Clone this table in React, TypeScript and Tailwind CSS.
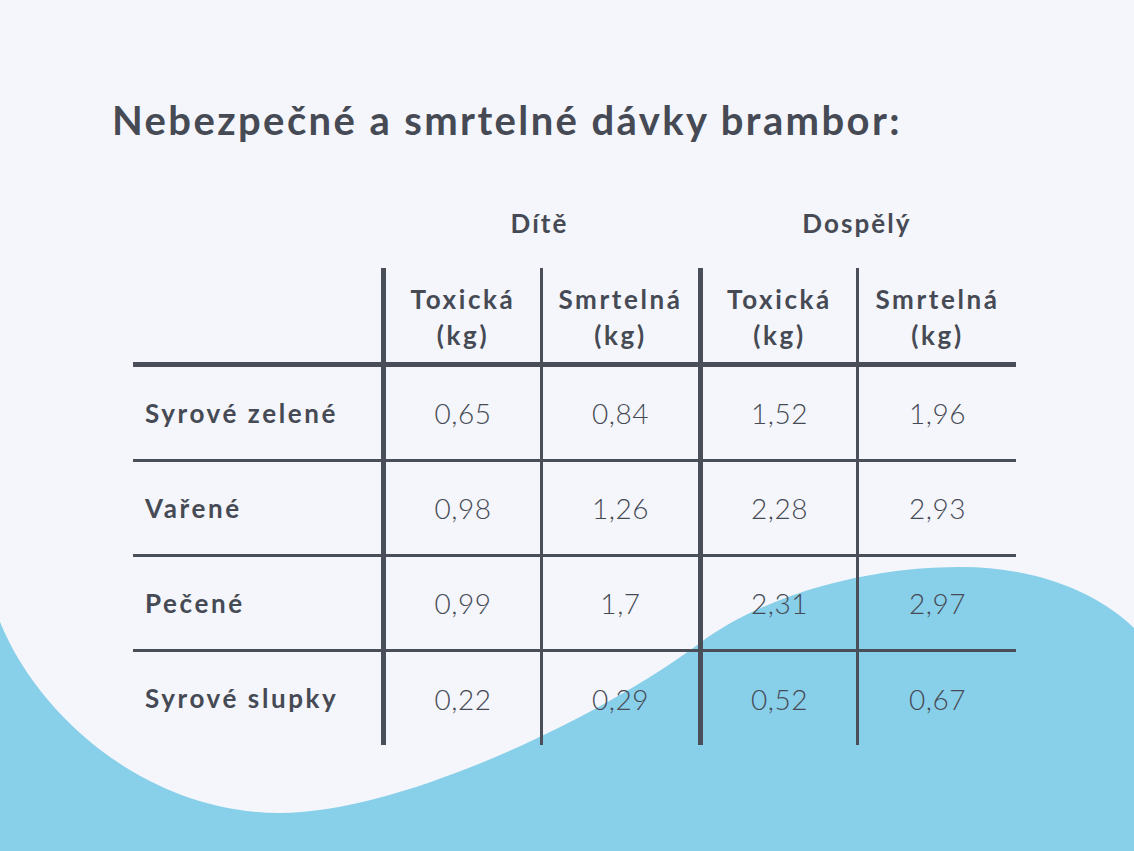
const rows = [
  { label: "Syrové zelené", values: ["0,65", "0,84", "1,52", "1,96"] },
  { label: "Vařené", values: ["0,98", "1,26", "2,28", "2,93"] },
  { label: "Pečené", values: ["0,99", "1,7", "2,31", "2,97"] },
  { label: "Syrové slupky", values: ["0,22", "0,29", "0,52", "0,67"] },
];

const cols = "grid grid-cols-[248px_159px_158px_158px_160px]";
const lines = ["", "border-l-[5px]", "border-l-[3px]", "border-l-[5px]", "border-l-[3px]"];

function Wave() {
  return (
    <svg
      className="absolute inset-0 h-full w-full"
      viewBox="0 0 1134 851"
      preserveAspectRatio="none"
    >
      <path
        d="M0,622 C40,720 150,813 280,813 C400,813 600,718 700,643 C760,598 860,567 960,567 C1040,567 1100,595 1134,628 L1134,851 L0,851 Z"
        fill="#88cfea"
      />
    </svg>
  );
}

export default function App() {
  return (
    <div
      className="relative h-[851px] w-full overflow-hidden bg-[#f4f6fb] text-[#464a54]"
      style={{ fontFamily: "Lato, 'Open Sans', sans-serif" }}
    >
      <Wave />
      <div className="relative flex flex-col pl-[133px] pt-[90px]">
        <h1 className="-ml-[21px] text-[40px] font-bold leading-[60px] tracking-[0.06em]">
          Nebezpečné a smrtelné dávky brambor:
        </h1>

        <div className={`${cols} mt-[46px] h-[54px] items-center text-[26px] font-bold tracking-[0.08em]`}>
          <div />
          <div className="col-span-2 text-center">Dítě</div>
          <div className="col-span-2 text-center">Dospělý</div>
        </div>

        <div className="mt-[18px] w-[883px] border-[#4a4e58]">
          <div className={`${cols} h-[99px] border-b-[5px] border-[#4a4e58]`}>
            <div />
            {["Toxická", "Smrtelná", "Toxická", "Smrtelná"].map((h, i) => (
              <div
                key={i}
                className={`${lines[i + 1]} flex flex-col items-center justify-center border-[#4a4e58] pt-[4px] text-[26px] font-bold leading-[36px] tracking-[0.1em]`}
              >
                <span>{h}</span>
                <span>(kg)</span>
              </div>
            ))}
          </div>

          {rows.map((r, ri) => (
            <div
              key={r.label}
              className={`${cols} ${ri < 3 ? "h-[95px] border-b-[3px]" : "h-[93px]"} border-[#4a4e58]`}
            >
              <div className="flex items-center pl-[12px] text-[26px] font-bold tracking-[0.1em]">
                {r.label}
              </div>
              {r.values.map((v, i) => (
                <div
                  key={i}
                  className={`${lines[i + 1]} flex items-center justify-center border-[#4a4e58] text-[28px] font-light tracking-[0.02em]`}
                >
                  {v}
                </div>
              ))}
            </div>
          ))}
        </div>
      </div>
    </div>
  );
}
